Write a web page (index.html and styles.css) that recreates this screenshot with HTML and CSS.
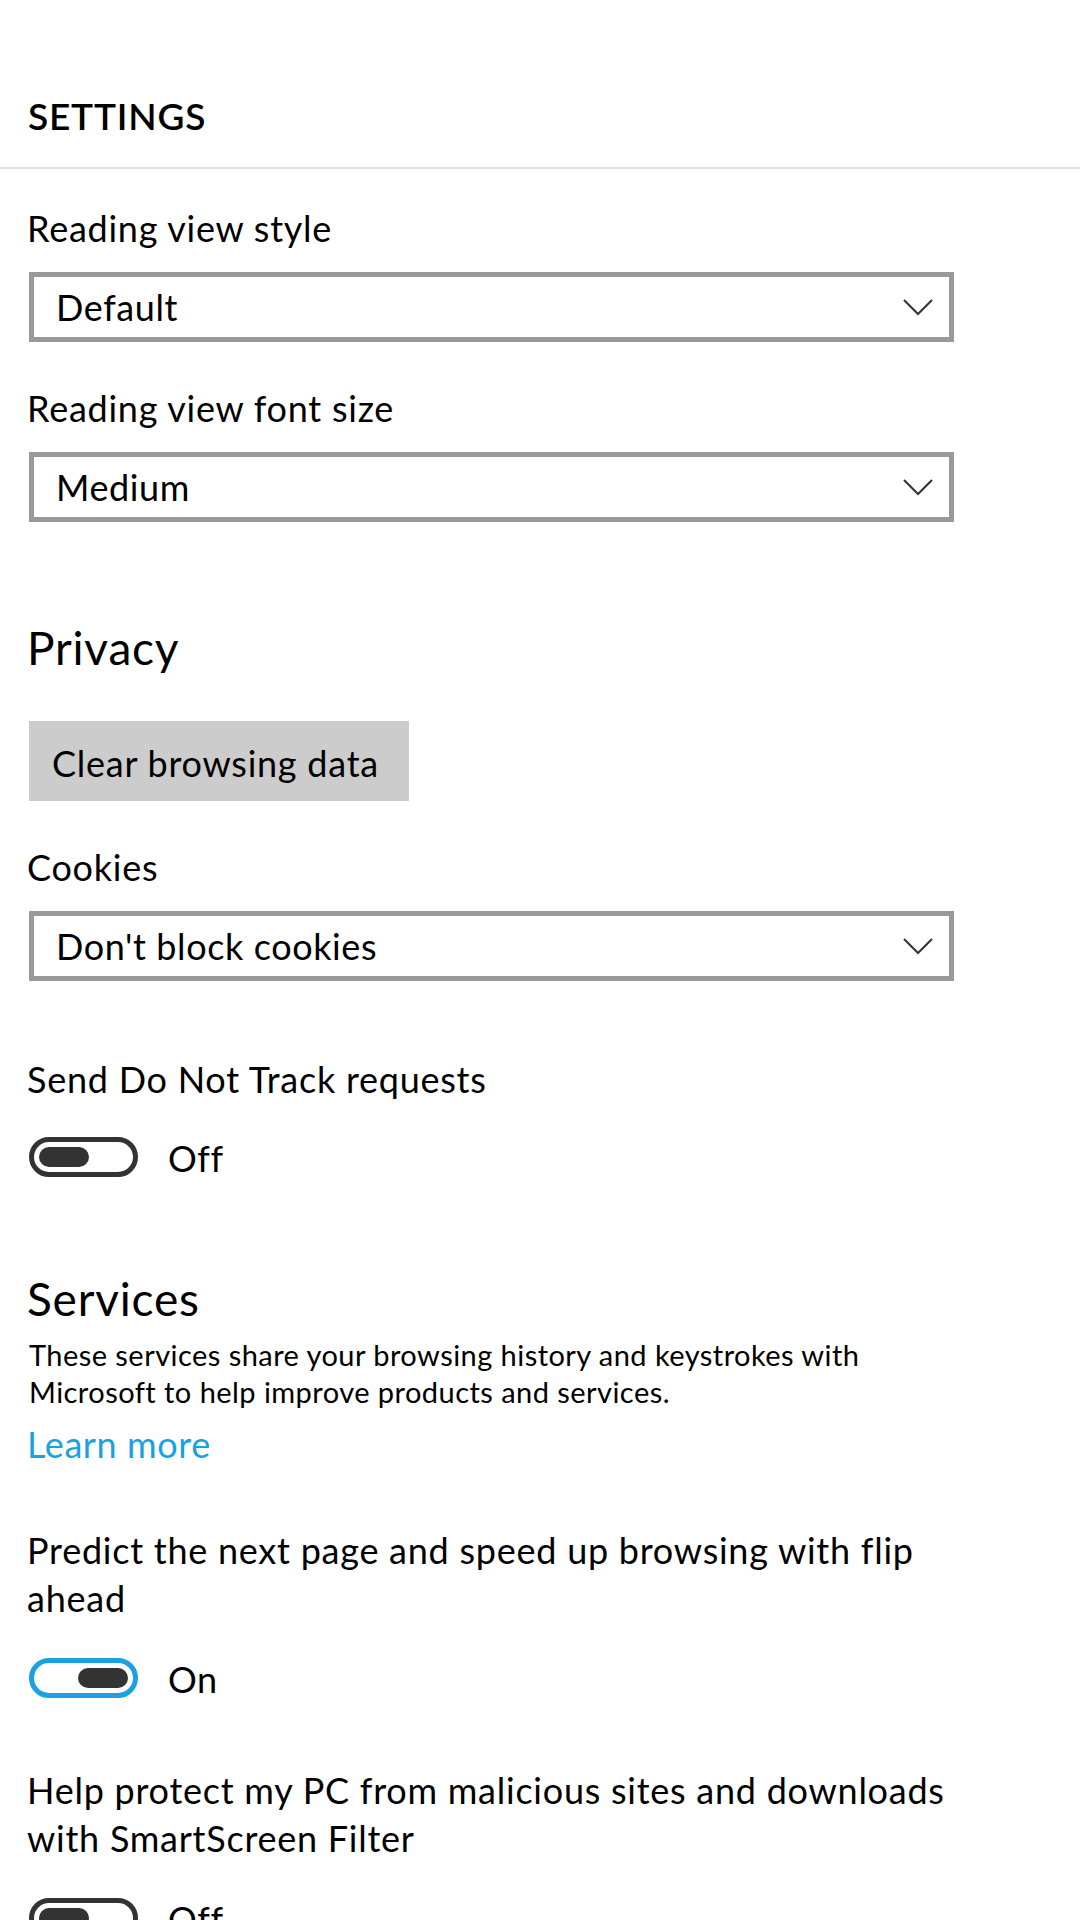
FILE: index.html
```html
<!DOCTYPE html>
<html lang="en">
<head>
<meta charset="utf-8">
<title>Settings</title>
<link rel="stylesheet" href="styles.css">
</head>
<body>
<header class="header">
  <h1 class="header-title">SETTINGS</h1>
</header>
<main class="content">
  <section class="group group-first">
    <div class="label">Reading view style</div>
    <div class="dropdown">
      <span class="dropdown-value">Default</span>
      <svg class="chevron" width="30" height="17" viewBox="0 0 30 17"><path d="M1 1 L15 15 L29 1" fill="none" stroke="#333" stroke-width="2"/></svg>
    </div>
    <div class="label label-gap">Reading view font size</div>
    <div class="dropdown">
      <span class="dropdown-value">Medium</span>
      <svg class="chevron" width="30" height="17" viewBox="0 0 30 17"><path d="M1 1 L15 15 L29 1" fill="none" stroke="#333" stroke-width="2"/></svg>
    </div>
  </section>

  <section class="group">
    <h2 class="section-title section-privacy">Privacy</h2>
    <button class="button" type="button">Clear browsing data</button>
    <div class="label label-gap">Cookies</div>
    <div class="dropdown">
      <span class="dropdown-value">Don't block cookies</span>
      <svg class="chevron" width="30" height="17" viewBox="0 0 30 17"><path d="M1 1 L15 15 L29 1" fill="none" stroke="#333" stroke-width="2"/></svg>
    </div>
    <div class="label label-toggle-gap">Send Do Not Track requests</div>
    <div class="toggle-row">
      <span class="toggle"><span class="knob"></span></span>
      <span class="toggle-text">Off</span>
    </div>
  </section>

  <section class="group">
    <h2 class="section-title section-services">Services</h2>
    <p class="description">These services share your browsing history and keystrokes with Microsoft to help improve products and services.</p>
    <a class="link" href="#">Learn more</a>
    <div class="label label-wrap label-predict">Predict the next page and speed up browsing with flip ahead</div>
    <div class="toggle-row">
      <span class="toggle toggle-on"><span class="knob"></span></span>
      <span class="toggle-text">On</span>
    </div>
    <div class="label label-wrap label-help">Help protect my PC from malicious sites and downloads with SmartScreen Filter</div>
    <div class="toggle-row">
      <span class="toggle"><span class="knob"></span></span>
      <span class="toggle-text">Off</span>
    </div>
  </section>
</main>
</body>
</html>
```

FILE: styles.css
```css
html, body {
  margin: 0;
  padding: 0;
  background: #ffffff;
}

body {
  width: 1080px;
  height: 1920px;
  overflow: hidden;
  font-family: Lato, "Open Sans", "Liberation Sans", sans-serif;
  color: #000000;
}

.header {
  padding: 92px 0 27px 28px;
  border-bottom: 2px solid #dcdcdc;
}

.header-title {
  margin: 0;
  font-size: 37px;
  line-height: 48px;
  font-weight: 600;
  letter-spacing: 0.8px;
}

.content {
  padding-left: 29px;
  width: 965px;
}

.group {
  display: flex;
  flex-direction: column;
  align-items: flex-start;
}

.group-first {
  padding-top: 35px;
}

.label {
  font-size: 36px;
  line-height: 48px;
  letter-spacing: 0.75px;
  margin-bottom: 20px;
  margin-left: -2px;
}

.label-gap {
  margin-top: 42px;
}

.label-toggle-gap {
  margin-top: 74px;
  margin-bottom: 34px;
}

.label-wrap {
  margin-bottom: 36px;
  max-width: 960px;
}

.label-predict {
  margin-top: 58px;
}

.label-help {
  margin-top: 68px;
}

.dropdown {
  box-sizing: border-box;
  width: 925px;
  height: 70px;
  border: 5px solid #999999;
  display: flex;
  align-items: center;
  justify-content: space-between;
  padding: 0 16px 0 22px;
}

.dropdown-value {
  font-size: 36px;
  line-height: 60px;
  letter-spacing: 0.6px;
}

.chevron {
  display: block;
  flex: none;
}

.section-title {
  margin: 0 0 0 -2px;
  font-size: 46px;
  line-height: 56px;
  font-weight: 400;
  letter-spacing: 0.8px;
}

.section-privacy {
  margin-top: 98px;
  margin-bottom: 45px;
}

.section-services {
  margin-top: 94px;
  margin-bottom: 9px;
}

.button {
  box-sizing: border-box;
  width: 380px;
  height: 80px;
  padding: 4px 0 0 23px;
  border: none;
  background: #cccccc;
  font-family: inherit;
  font-size: 36px;
  line-height: 76px;
  letter-spacing: 0.75px;
  color: #000000;
  text-align: left;
}

.toggle-row {
  display: flex;
  align-items: center;
  gap: 30px;
  height: 40px;
}

.toggle {
  box-sizing: border-box;
  width: 109px;
  height: 40px;
  border: 5px solid #333333;
  border-radius: 20px;
  padding: 5px;
  display: flex;
  justify-content: flex-start;
}

.toggle-on {
  border-color: #1ba1e2;
  justify-content: flex-end;
}

.knob {
  width: 50px;
  height: 20px;
  border-radius: 10px;
  background: #333333;
}

.toggle-text {
  font-size: 36px;
  line-height: 40px;
  padding-top: 2px;
  letter-spacing: 0.6px;
}

.description {
  margin: 0 0 10px 0;
  font-size: 29px;
  line-height: 37px;
  letter-spacing: 0.45px;
  width: 900px;
}

.link {
  margin-left: -2px;
  font-size: 36px;
  line-height: 48px;
  letter-spacing: 0.6px;
  color: #1ba1e2;
  text-decoration: none;
}
```
